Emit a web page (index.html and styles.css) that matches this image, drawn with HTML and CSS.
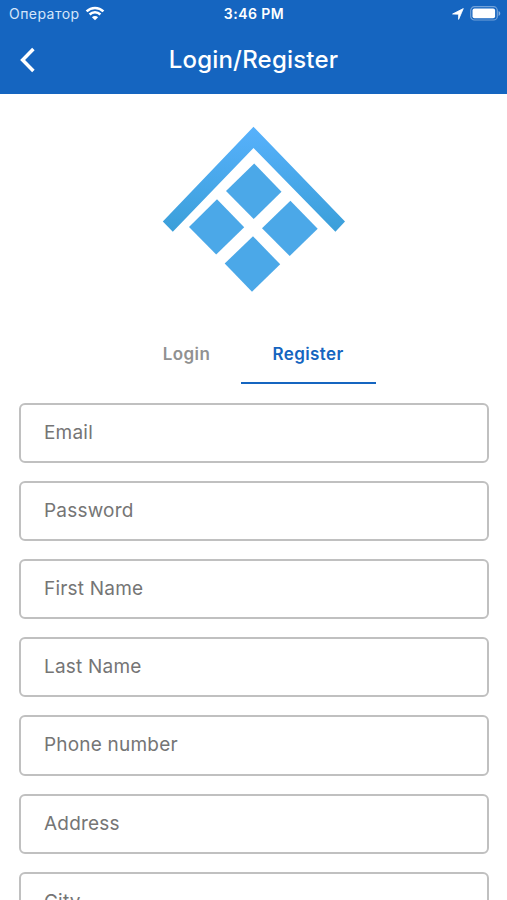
FILE: index.html
```
<!DOCTYPE html>
<html lang="en">
<head>
	<meta charset="UTF-8">
	<title>Login/Register</title>
	<link rel="stylesheet" href="styles.css">
</head>
<body>
	<div class="app">
		<header class="header">
			<div class="status">
				<div class="carrier">
					<span class="carrier-name">Оператор</span>
					<svg width="20" height="15" viewBox="0 0 20 15">
						<path d="M1.6 5.4a12 12 0 0 1 16.8 0M4.6 8.5a7.7 7.7 0 0 1 10.8 0" fill="none" stroke="#fff" stroke-width="2.5"/>
						<path d="M10 14.3L6.9 11.2a4.4 4.4 0 0 1 6.2 0z" fill="#fff"/>
					</svg>
				</div>
				<span class="time">3:46 PM</span>
				<div class="indicators">
					<svg width="12" height="12" viewBox="0 0 12 12">
						<path d="M11.3 .6L6.6 11.4V6.2L.6 6z" fill="#fff" stroke="#fff" stroke-width=".8" stroke-linejoin="round"/>
					</svg>
					<svg width="31" height="15" viewBox="0 0 31 15">
						<rect x=".7" y=".7" width="26.6" height="13.3" rx="3.8" fill="none" stroke="#fff" stroke-opacity=".4" stroke-width="1.2"/>
						<rect x="2.5" y="2.4" width="22.6" height="9.9" rx="2" fill="#fff"/>
						<path d="M28.6 5c2.2 1 2.2 3.9 0 4.9z" fill="#fff" fill-opacity=".5"/>
					</svg>
				</div>
			</div>
			<div class="navbar">
				<a class="back" href="#">
					<svg width="16" height="26" viewBox="0 0 16 26">
						<path d="M13.4 2L2.6 13l10.8 11" fill="none" stroke="#fff" stroke-width="3.5"/>
					</svg>
				</a>
				<h1 class="title">Login/Register</h1>
			</div>
		</header>

		<div class="logo">
			<svg width="184" height="168" viewBox="0 0 184 168">
				<defs>
					<linearGradient id="roof" x1="0" y1="0" x2="0" y2="1">
						<stop offset="0" stop-color="#57b1fc"/>
						<stop offset="1" stop-color="#3b9fd9"/>
					</linearGradient>
				</defs>
				<path d="M91.5 .8L183 95.6l-9.6 10.2L91.5 22 10.8 105.8 .8 95.6z" fill="url(#roof)"/>
				<g fill="#4ba8e8">
					<path d="M92.2 37.5l27.3 28.3-27.8 27.2L64 65z"/>
					<path d="M55 73.3l27.2 28-28 27.2L27 101z"/>
					<path d="M128.4 74.7l27.3 28-28 27.3L100 102.3z"/>
					<path d="M91 110.3l27.2 28-28.2 27.4-27.3-28.2z"/>
				</g>
			</svg>
		</div>

		<nav class="tabs">
			<a class="tab" href="#">Login</a>
			<a class="tab active" href="#">Register</a>
		</nav>

		<form class="form">
			<label class="field">Email</label>
			<label class="field">Password</label>
			<label class="field">First Name</label>
			<label class="field">Last Name</label>
			<label class="field">Phone number</label>
			<label class="field">Address</label>
			<label class="field">City</label>
		</form>
	</div>
</body>
</html>
```
FILE: styles.css
```
*{
	margin: 0;
	padding: 0;
	box-sizing: border-box;
	text-decoration: none;
}
body{
	background: #fff;
	font-family: Inter, "Liberation Sans", sans-serif;
}
svg{
	display: block;
}
.app{
	width: 507px;
	height: 900px;
	overflow: hidden;
}
.header{
	height: 94px;
	background: #1565c0;
	color: #fff;
}
.status{
	display: grid;
	grid-template-columns: 1fr auto 1fr;
	align-items: center;
	height: 28px;
	padding: 0 6px 0 9px;
	line-height: 28px;
}
.carrier{
	display: flex;
	align-items: center;
	gap: 5px;
}
.carrier svg{
	margin-top: -2px;
}
.carrier-name{
	font-size: 14px;
	letter-spacing: .45px;
	color: #d5e6fa;
}
.time{
	padding-right: 2px;
	font-size: 14px;
	font-weight: 600;
	letter-spacing: .45px;
}
.indicators{
	display: flex;
	align-items: center;
	justify-content: flex-end;
	gap: 6px;
	margin-top: -1px;
}
.navbar{
	display: grid;
	grid-template-columns: 60px 1fr 60px;
	align-items: center;
	height: 64px;
}
.back{
	padding-left: 20px;
}
.title{
	font-size: 24px;
	font-weight: 500;
	line-height: 64px;
	letter-spacing: .2px;
	text-align: center;
}
.logo{
	display: flex;
	justify-content: center;
	padding: 32px 0 28px;
}
.tabs{
	display: flex;
	justify-content: center;
	height: 62px;
}
.tab{
	width: 109px;
	padding-left: 1px;
	border-bottom: 2px solid transparent;
	color: #919191;
	font-size: 17px;
	font-weight: 600;
	line-height: 65px;
	letter-spacing: .4px;
	text-align: center;
}
.tab.active{
	width: 135px;
	padding-left: 0;
	border-color: #1565c0;
	color: #1565c0;
}
.form{
	display: flex;
	flex-direction: column;
	gap: 18px;
	padding: 18.6px 18px 0 19px;
}
.field{
	flex: none;
	height: 60.2px;
	padding-left: 23px;
	border: 2px solid #c0c0c0;
	border-radius: 6px;
	color: #757575;
	font-size: 19px;
	line-height: 56px;
	letter-spacing: .2px;
}
```
